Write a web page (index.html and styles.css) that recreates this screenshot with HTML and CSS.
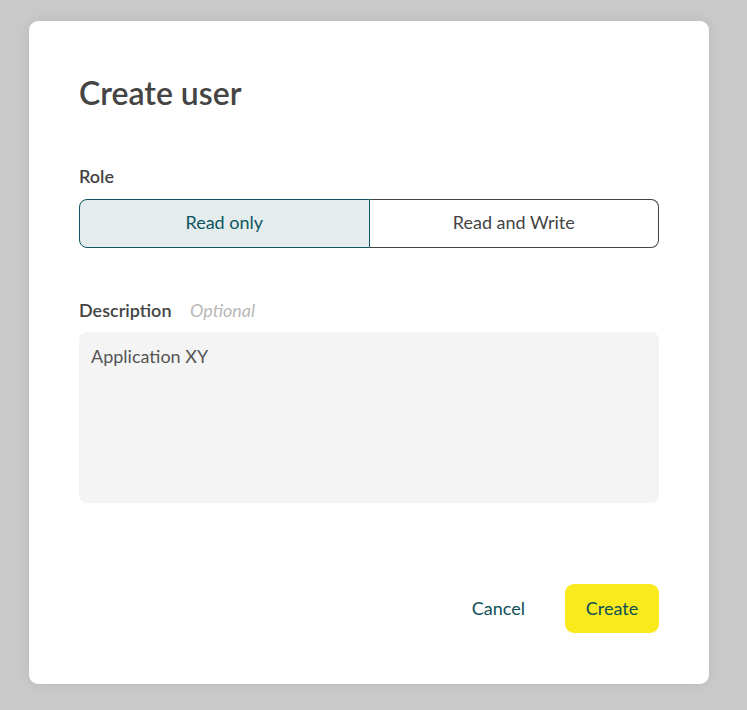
FILE: index.html
```html
<!DOCTYPE html>
<html lang="en">
<head>
<meta charset="utf-8">
<title>Create user</title>
<link rel="stylesheet" href="styles.css">
</head>
<body>
<div class="modal">
  <h1 class="title">Create user</h1>
  <div class="field">
    <div class="label">Role</div>
    <div class="segmented">
      <button class="seg seg-active">Read only</button>
      <button class="seg">Read and Write</button>
    </div>
  </div>
  <div class="field field-desc">
    <div class="label">Description <span class="optional">Optional</span></div>
    <div class="textarea">Application XY</div>
  </div>
  <div class="actions">
    <button class="btn-cancel">Cancel</button>
    <button class="btn-create">Create</button>
  </div>
</div>
</body>
</html>
```
FILE: styles.css
```css
html, body {
  margin: 0;
  padding: 0;
}
body {
  background: #c9c9c9;
  font-family: Lato, "Noto Sans", sans-serif;
  padding: 21px 0 0 29px;
  height: 710px;
  box-sizing: border-box;
}
.modal {
  width: 680px;
  height: 663px;
  box-sizing: border-box;
  background: #fff;
  border-radius: 9px;
  box-shadow: 0 0 12px rgba(0,0,0,0.08);
  padding: 50px 50px 51px 50px;
  display: flex;
  flex-direction: column;
}
.title {
  margin: 3px 0 0 0;
  font-size: 32px;
  line-height: 38px;
  font-weight: 600;
  color: #444;
}
.field {
  margin-top: 53px;
}
.label {
  font-size: 18px;
  line-height: 22px;
  font-weight: 600;
  color: #444;
  margin-bottom: 12px;
}
.optional {
  font-weight: 400;
  font-style: italic;
  color: #b8b8b8;
  margin-left: 14px;
}
.segmented {
  display: flex;
  height: 49px;
}
.seg {
  flex: 1;
  font-family: inherit;
  font-size: 18px;
  background: #fff;
  color: #444;
  border: 1px solid #444;
  border-left: none;
  border-radius: 0 8px 8px 0;
  margin: 0;
  padding: 0 0 3px 0;
}
.seg-active {
  background: #e4ecee;
  color: #0d5560;
  border: 1px solid #0d5560;
  border-radius: 8px 0 0 8px;
}
.field-desc {
  margin-top: 51px;
}
.field-desc .label {
  margin-bottom: 11px;
}
.textarea {
  height: 171px;
  box-sizing: border-box;
  background: #f4f4f4;
  border-radius: 8px;
  padding: 12px 12px;
  font-size: 18px;
  line-height: 24px;
  color: #555;
}
.actions {
  margin-top: auto;
  display: flex;
  justify-content: flex-end;
  align-items: center;
  gap: 40px;
}
.btn-cancel {
  background: none;
  border: none;
  font-family: inherit;
  font-size: 18px;
  color: #0d4f58;
  padding: 0 0 2px 0;
}
.btn-create {
  background: #f8ea1c;
  border: none;
  border-radius: 9px;
  height: 49px;
  width: 94px;
  font-family: inherit;
  font-size: 18px;
  color: #0d4f58;
  padding: 0 0 2px 0;
}
```
